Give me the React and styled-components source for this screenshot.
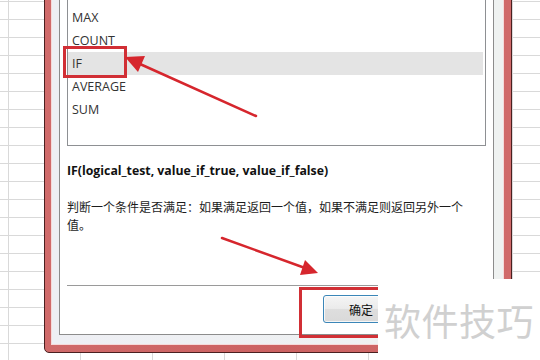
import styled, { createGlobalStyle } from "styled-components";

const GlobalStyle = createGlobalStyle`
  html, body {
    margin: 0;
    padding: 0;
  }
  body {
    width: 540px;
    height: 360px;
    overflow: hidden;
    background-color: #fff;
    background-image:
      linear-gradient(to bottom, #d9d9d9 1px, transparent 1px),
      linear-gradient(to right, #d9d9d9 1px, transparent 1px);
    background-size: 100% 18px, 72px 100%;
    background-position: 0 1px, 8px 0;
    font-family: "Open Sans", "Noto Sans CJK SC", sans-serif;
  }
`;

const Screen = styled.div`
  position: relative;
  width: 540px;
  height: 360px;
  overflow: hidden;
`;

const Frame = styled.div`
  box-sizing: border-box;
  width: 468px;
  margin: -30px 0 0 44px;
  padding: 6px 7px 7px 6px;
  border: 1px solid #4a2020;
  border-radius: 0 0 3px 5px;
  background: linear-gradient(to right, #d06a6a, #cc6262 50%, #d06a6a);
`;

const Inner = styled.div`
  padding: 7px 9px 9px 7px;
  border: 1px solid #f6dada;
  background: linear-gradient(to right, #eeeff4, #eff2f1);
`;

const Panel = styled.div`
  box-sizing: border-box;
  height: 350px;
  display: flex;
  flex-direction: column;
  padding: 10px 7px 11px 7px;
  background: #fff;
  border: 1px solid #8c8c8c;
`;

const List = styled.div`
  position: relative;
  padding: 9px 0 24px;
  border: 1px solid #8e9093;
`;

const Row = styled.div`
  height: 23px;
  line-height: 23px;
  margin-right: 2px;
  padding-left: 4px;
  font-size: 12.5px;
  color: #333;
  background: ${(p) => (p.$selected ? "#e4e4e4" : "transparent")};
`;

const Callout = styled.div`
  position: absolute;
  box-sizing: border-box;
  border: 3px solid #d12f35;
  pointer-events: none;
`;

const Signature = styled.div`
  margin-top: 16px;
  line-height: 18px;
  font-size: 12.3px;
  font-weight: 700;
  color: #111;
`;

const Description = styled.div`
  max-width: 400px;
  margin-top: 18px;
  line-height: 18px;
  font-size: 12px;
  color: #1c1c1c;
  font-family: "Noto Sans CJK SC", sans-serif;
`;

const Footer = styled.div`
  position: relative;
  margin-top: auto;
  display: flex;
  justify-content: flex-end;
  padding: 9px 87px 0 0;
  border-top: 1px solid #9a9a9a;
`;

const Button = styled.button`
  width: 76px;
  height: 28px;
  padding: 0;
  border: 1px solid #3b86b8;
  border-radius: 3px;
  background: linear-gradient(to bottom, #f5f5f5, #ebebeb 48%, #dedede 52%, #d9d9d9);
  box-shadow: inset 0 0 0 1px rgba(255, 255, 255, 0.75);
  font-family: "Noto Sans CJK SC", sans-serif;
  font-size: 12px;
  color: #111;
`;

const Watermark = styled.div`
  position: absolute;
  left: 378px;
  top: 279px;
  width: 162px;
  height: 81px;
  box-sizing: border-box;
  padding: 0 0 0 6px;
  display: flex;
  align-items: center;
  background: #fff;
  color: #d0d0d0;
  font-family: "Noto Sans CJK SC", sans-serif;
  font-size: 37px;
  letter-spacing: 0.5px;
`;

const Arrows = styled.svg`
  position: absolute;
  left: 0;
  top: 0;
  pointer-events: none;
`;

const functions = ["MAX", "COUNT", "IF", "AVERAGE", "SUM"];

export default function App() {
  return (
    <Screen>
      <GlobalStyle />
      <Frame>
        <Inner>
          <Panel>
            <List>
              {functions.map((name) => (
                <Row key={name} $selected={name === "IF"}>
                  {name}
                </Row>
              ))}
              <Callout style={{ left: -5, top: 49, width: 64, height: 32 }} />
            </List>
            <Signature>IF(logical_test, value_if_true, value_if_false)</Signature>
            <Description>
              判断一个条件是否满足：如果满足返回一个值，如果不满足则返回另外一个值。
            </Description>
            <Footer>
              <Button>确定</Button>
              <Callout style={{ left: 232, top: 1, width: 190, height: 51 }} />
            </Footer>
          </Panel>
        </Inner>
      </Frame>
      <Arrows width="540" height="360" viewBox="0 0 540 360">
        <g stroke="#d6262d" strokeWidth="2.5" strokeLinecap="round">
          <line x1="256" y1="116" x2="140" y2="64" />
          <line x1="222" y1="238" x2="305" y2="268" />
        </g>
        <g fill="#d6262d">
          <polygon points="125,57 145,56 138,72" />
          <polygon points="318,273 305,260 300,275" />
        </g>
      </Arrows>
      <Watermark>软件技巧</Watermark>
    </Screen>
  );
}
